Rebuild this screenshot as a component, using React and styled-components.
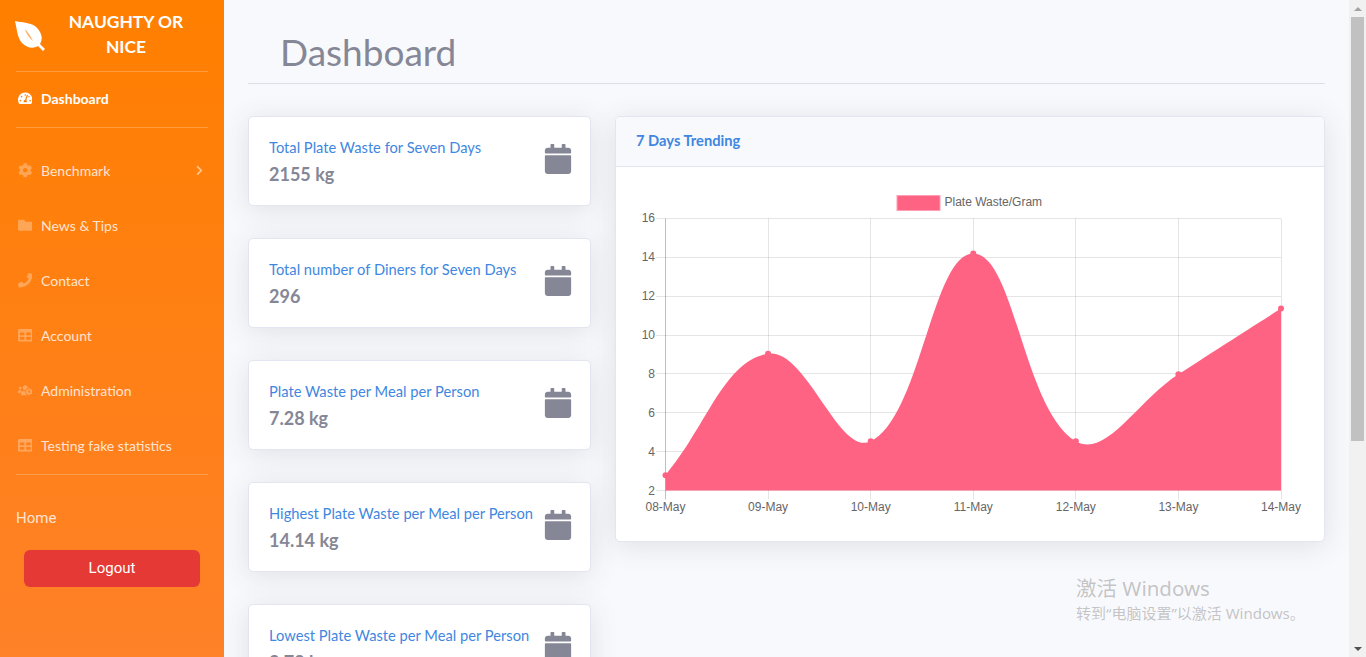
import React from 'react'
import styled, { createGlobalStyle } from 'styled-components'
import {
  FaTachometerAlt,
  FaCog,
  FaFolder,
  FaPhone,
  FaTable,
  FaUsersCog,
  FaCalendar,
  FaChevronRight,
} from 'react-icons/fa'

const UI_FONT = '"Lato", "Open Sans", sans-serif'

const navItems = [
  { label: 'Benchmark', Icon: FaCog, arrow: true },
  { label: 'News & Tips', Icon: FaFolder },
  { label: 'Contact', Icon: FaPhone },
  { label: 'Account', Icon: FaTable },
  { label: 'Administration', Icon: FaUsersCog },
  { label: 'Testing fake statistics', Icon: FaTable },
]

const stats = [
  { title: 'Total Plate Waste for Seven Days', value: '2155 kg' },
  { title: 'Total number of Diners for Seven Days', value: '296' },
  { title: 'Plate Waste per Meal per Person', value: '7.28 kg' },
  { title: 'Highest Plate Waste per Meal per Person', value: '14.14 kg' },
  { title: 'Lowest Plate Waste per Meal per Person', value: '2.78 kg' },
]

const days = ['08-May', '09-May', '10-May', '11-May', '12-May', '13-May', '14-May']
const waste = [2.79, 9.04, 4.53, 14.2, 4.53, 7.98, 11.37]
const ticks = [2, 4, 6, 8, 10, 12, 14, 16]

// chart area in page pixels, the svg viewBox below uses the same numbers
const LEFT = 665.5
const RIGHT = 1281
const BOTTOM = 490.5
const STEP_X = (RIGHT - LEFT) / 6
const STEP_Y = 19.43

const xAt = (i) => LEFT + i * STEP_X
const yAt = (v) => BOTTOM - (v - 2) * STEP_Y
// grid lines sit on whole pixels so they stay one pixel wide
const crisp = (n) => Math.floor(n) + 0.5

// same spline chart.js draws with tension 0.4
function splinePath(points, tension = 0.4) {
  const controls = points.map((cur, i) => {
    const prev = points[i - 1] || cur
    const next = points[i + 1] || cur
    const d01 = Math.hypot(cur.x - prev.x, cur.y - prev.y)
    const d12 = Math.hypot(next.x - cur.x, next.y - cur.y)
    const total = d01 + d12
    const fa = (tension * d01) / total
    const fb = (tension * d12) / total
    return {
      before: { x: cur.x - fa * (next.x - prev.x), y: cur.y - fa * (next.y - prev.y) },
      after: { x: cur.x + fb * (next.x - prev.x), y: cur.y + fb * (next.y - prev.y) },
    }
  })
  let d = `M${points[0].x} ${points[0].y}`
  for (let i = 1; i < points.length; i++) {
    const a = controls[i - 1].after
    const b = controls[i].before
    d += ` C${a.x} ${a.y} ${b.x} ${b.y} ${points[i].x} ${points[i].y}`
  }
  return d
}

const points = waste.map((v, i) => ({ x: xAt(i), y: yAt(v) }))
const areaPath = `${splinePath(points)} L${RIGHT} ${BOTTOM} L${LEFT} ${BOTTOM} Z`

const GlobalStyle = createGlobalStyle`
  html, body {
    margin: 0;
    height: 100%;
    overflow: hidden;
    background: #f8f9fc;
    font-family: ${UI_FONT};
  }
  * { box-sizing: border-box; }
`

const Page = styled.div`
  display: flex;
  height: 657px;
  overflow: hidden;
  position: relative;
`

const Sidebar = styled.aside`
  flex: 0 0 224px;
  padding: 0 16px;
  background: linear-gradient(180deg, #ff7f00 0%, #ff8128 100%);
  color: #fff;
`

const Brand = styled.div`
  display: flex;
  align-items: center;
  height: 71px;
  margin-left: -2px;

  svg {
    flex: none;
  }
`

const BrandName = styled.div`
  flex: 1;
  padding: 0 16px 0 14px;
  text-align: center;
  font-size: 17.4px;
  font-weight: 700;
  line-height: 25px;
  margin-top: -3px;
`

const Divider = styled.hr`
  margin: 0;
  border: 0;
  border-top: 1px solid rgba(255, 255, 255, 0.22);
`

const NavRow = styled.div`
  display: flex;
  align-items: center;
  height: 55px;
  padding-bottom: ${(p) => (p.$active ? '2px' : '0')};
  font-size: 14px;
  font-weight: ${(p) => (p.$active ? 700 : 400)};
  color: ${(p) => (p.$active ? '#fff' : 'rgba(255, 255, 255, 0.8)')};
`

const NavIcon = styled.span`
  display: flex;
  justify-content: center;
  width: 18px;
  margin-right: 7px;
  color: ${(p) => (p.$active ? '#fff' : 'rgba(255, 255, 255, 0.3)')};

  svg {
    width: auto;
    height: 14.5px;
    flex: none;
  }
`

const Arrow = styled(FaChevronRight)`
  margin-left: auto;
  margin-right: 3px;
  font-size: 11px;
  color: rgba(255, 255, 255, 0.55);
`

const NavList = styled.nav`
  padding: 15px 0 1px;
`

const HomeLink = styled.div`
  margin-top: 31px;
  font-family: Roboto, sans-serif;
  font-size: 15px;
  line-height: 24px;
  color: rgba(255, 255, 255, 0.8);
`

const LogoutButton = styled.button`
  display: block;
  width: 176px;
  height: 37px;
  margin: 20px 0 0 8px;
  padding-bottom: 3px;
  border: 0;
  border-radius: 6px;
  background: #e53935;
  color: #fff;
  font-family: Roboto, sans-serif;
  font-size: 15px;
`

const Main = styled.main`
  flex: 1;
  min-width: 0;
  padding: 0 24px;
  overflow: hidden;
`

const PageHeader = styled.header`
  height: 84px;
  padding: 27px 0 0 32px;
  border-bottom: 1px solid #dddfe6;
`

const Title = styled.h1`
  margin: 0;
  font-size: 37px;
  font-weight: 400;
  line-height: 50px;
  color: #858796;
`

const Columns = styled.div`
  display: grid;
  grid-template-columns: 343px 710px;
  gap: 24px;
  align-items: start;
  padding-top: 32px;
`

const CardColumn = styled.div`
  display: flex;
  flex-direction: column;
  gap: 32px;
`

const StatCard = styled.section`
  display: flex;
  align-items: center;
  justify-content: space-between;
  height: 90px;
  padding: 0 17px 0 20px;
  background: #fff;
  border: 1px solid #e3e6f0;
  border-radius: 5px;
  box-shadow: 0 4px 28px rgba(58, 59, 69, 0.13);
`

const StatText = styled.div`
  padding-top: 2px;
`

const StatTitle = styled.div`
  font-size: 14.7px;
  line-height: 21px;
  color: #3f87e0;
  white-space: nowrap;
`

const StatValue = styled.div`
  margin-top: 3px;
  font-size: 18px;
  font-weight: 700;
  line-height: 27px;
  color: #858796;
`

const StatIcon = styled(FaCalendar)`
  flex: none;
  margin-bottom: 4px;
  font-size: 30px;
  color: #858796;
`

const ChartCard = styled.section`
  height: 426px;
  background: #fff;
  border: 1px solid #e3e6f0;
  border-radius: 5px;
  box-shadow: 0 4px 28px rgba(58, 59, 69, 0.13);
  overflow: hidden;
`

const ChartHeader = styled.div`
  height: 50px;
  padding: 0 20px;
  background: #f8f9fc;
  border-bottom: 1px solid #e3e6f0;
  font-size: 14.7px;
  font-weight: 700;
  line-height: 47px;
  color: #3f87e0;
`

const ChartSvg = styled.svg`
  display: block;
  width: 708px;
  height: 375px;
  font-family: "Liberation Sans", Arial, sans-serif;
  font-size: 12px;
  fill: #666;
`

const ScrollTrack = styled.div`
  flex: 0 0 17px;
  display: flex;
  flex-direction: column;
  align-items: center;
  background: #f1f1f1;
`

const ScrollThumb = styled.div`
  width: 13px;
  height: 424px;
  margin-bottom: auto;
  background: #c1c1c1;
`

const ScrollButton = styled.div`
  flex: 0 0 17px;
  display: flex;
  align-items: center;
  justify-content: center;

  &::after {
    content: '';
    border-left: 4px solid transparent;
    border-right: 4px solid transparent;
    ${(p) => (p.$up ? 'border-bottom: 4px solid #a3a3a3;' : 'border-top: 4px solid #505050;')}
  }
`

const Watermark = styled.div`
  position: absolute;
  left: 1076px;
  top: 574px;
  font-family: "Noto Sans", "Noto Sans CJK SC", sans-serif;
  color: rgba(120, 120, 120, 0.42);
  pointer-events: none;
`

const WatermarkTitle = styled.div`
  font-size: 20.5px;
  line-height: 29px;
`

const WatermarkText = styled.div`
  font-size: 15px;
  line-height: 20px;
`

function LeafLogo() {
  return (
    <svg width="32" height="32" viewBox="0 0 32 32" aria-hidden="true">
      <path
        d="M1 1 C9 3 19 2 24 9 C28 14 29 19 26 24 L31 29 L29 31 L24 26 C19 29 13 28 8 23 C3 17 3 9 1 1 Z"
        fill="#fff"
      />
      <path d="M11 9 C14 12 17 17 19 21 C15 18 12 13 11 9 Z" fill="#ffb066" />
    </svg>
  )
}

function TrendChart() {
  return (
    <ChartSvg viewBox="616 167 708 375">
      <rect x="897" y="195.5" width="43" height="15" fill="#ff6384" stroke="#ff9fb4" />
      <text x="944.5" y="206">Plate Waste/Gram</text>

      {ticks.map((t) => (
        <g key={t}>
          <line x1="656" x2={RIGHT} y1={crisp(yAt(t))} y2={crisp(yAt(t))} stroke="rgba(0,0,0,0.1)" />
          <text x="655" y={yAt(t) + 4} textAnchor="end">{t}</text>
        </g>
      ))}
      {days.map((day, i) => (
        <g key={day}>
          <line
            x1={crisp(xAt(i))}
            x2={crisp(xAt(i))}
            y1={yAt(16)}
            y2={BOTTOM + 9}
            stroke={i === 0 ? 'rgba(0,0,0,0.25)' : 'rgba(0,0,0,0.1)'}
          />
          <text x={xAt(i)} y="511" textAnchor="middle">{day}</text>
        </g>
      ))}

      <path d={areaPath} fill="#ff6384" />
      {points.map((pt) => (
        <circle key={pt.x} cx={pt.x} cy={pt.y} r="3" fill="#ff6384" />
      ))}
    </ChartSvg>
  )
}

export default function App() {
  return (
    <>
      <GlobalStyle />
      <Page>
        <Sidebar>
          <Brand>
            <LeafLogo />
            <BrandName>NAUGHTY OR NICE</BrandName>
          </Brand>
          <Divider />
          <NavRow $active>
            <NavIcon $active><FaTachometerAlt /></NavIcon>
            Dashboard
          </NavRow>
          <Divider />
          <NavList>
            {navItems.map(({ label, Icon, arrow }) => (
              <NavRow key={label}>
                <NavIcon><Icon /></NavIcon>
                {label}
                {arrow && <Arrow />}
              </NavRow>
            ))}
          </NavList>
          <Divider />
          <HomeLink>Home</HomeLink>
          <LogoutButton>Logout</LogoutButton>
        </Sidebar>

        <Main>
          <PageHeader>
            <Title>Dashboard</Title>
          </PageHeader>
          <Columns>
            <CardColumn>
              {stats.map((s) => (
                <StatCard key={s.title}>
                  <StatText>
                    <StatTitle>{s.title}</StatTitle>
                    <StatValue>{s.value}</StatValue>
                  </StatText>
                  <StatIcon />
                </StatCard>
              ))}
            </CardColumn>
            <ChartCard>
              <ChartHeader>7 Days Trending</ChartHeader>
              <TrendChart />
            </ChartCard>
          </Columns>
        </Main>

        <ScrollTrack>
          <ScrollButton $up />
          <ScrollThumb />
          <ScrollButton />
        </ScrollTrack>

        <Watermark>
          <WatermarkTitle>激活 Windows</WatermarkTitle>
          <WatermarkText>转到“电脑设置”以激活 Windows。</WatermarkText>
        </Watermark>
      </Page>
    </>
  )
}
